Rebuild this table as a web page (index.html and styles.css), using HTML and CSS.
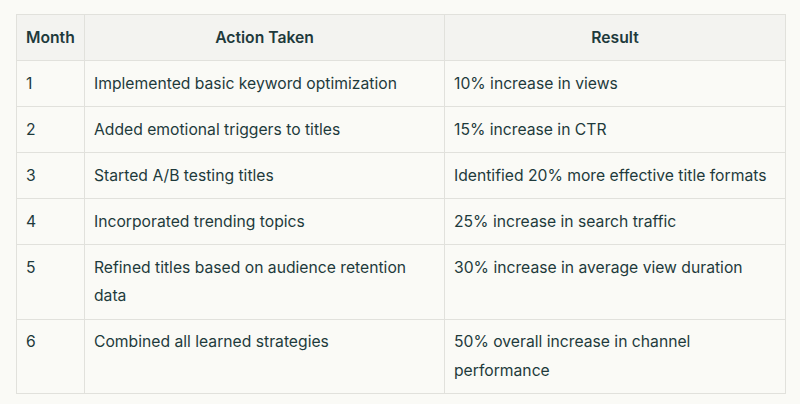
FILE: index.html
```html
<!DOCTYPE html>
<html>
<head>
<meta charset="utf-8">
<link rel="stylesheet" href="styles.css">
</head>
<body>
<div class="wrap">
<table class="results">
  <colgroup>
    <col class="c-month">
    <col class="c-action">
    <col class="c-result">
  </colgroup>
  <thead>
    <tr>
      <th class="left">Month</th>
      <th>Action Taken</th>
      <th>Result</th>
    </tr>
  </thead>
  <tbody>
    <tr><td>1</td><td>Implemented basic keyword optimization</td><td>10% increase in views</td></tr>
    <tr><td>2</td><td>Added emotional triggers to titles</td><td>15% increase in CTR</td></tr>
    <tr><td>3</td><td>Started A/B testing titles</td><td>Identified 20% more effective title formats</td></tr>
    <tr><td>4</td><td>Incorporated trending topics</td><td>25% increase in search traffic</td></tr>
    <tr><td>5</td><td>Refined titles based on audience retention data</td><td>30% increase in average view duration</td></tr>
    <tr><td>6</td><td>Combined all learned strategies</td><td>50% overall increase in channel performance</td></tr>
  </tbody>
</table>
</div>
</body>
</html>
```
FILE: styles.css
```css
html, body {
  margin: 0;
  padding: 0;
  background: #fafaf6;
}
body {
  font-family: Inter, "Liberation Sans", sans-serif;
  color: #1e3a3c;
  font-size: 15.7px;
}
.wrap {
  padding: 14px 15px 0 16px;
}
.results {
  width: 769px;
  border-collapse: collapse;
  table-layout: fixed;
  border: 1px solid #e1e1dc;
}
.c-month { width: 68px; }
.c-action { width: 360px; }
.c-result { width: 341px; }
th, td {
  border: 1px solid #e1e1dc;
  padding: 8.5px 9px 8px 9px;
  line-height: 28.5px;
  text-align: left;
  vertical-align: top;
}
th {
  background: #f3f3f0;
  font-weight: 600;
  text-align: center;
}
th.left { text-align: left; }
```
